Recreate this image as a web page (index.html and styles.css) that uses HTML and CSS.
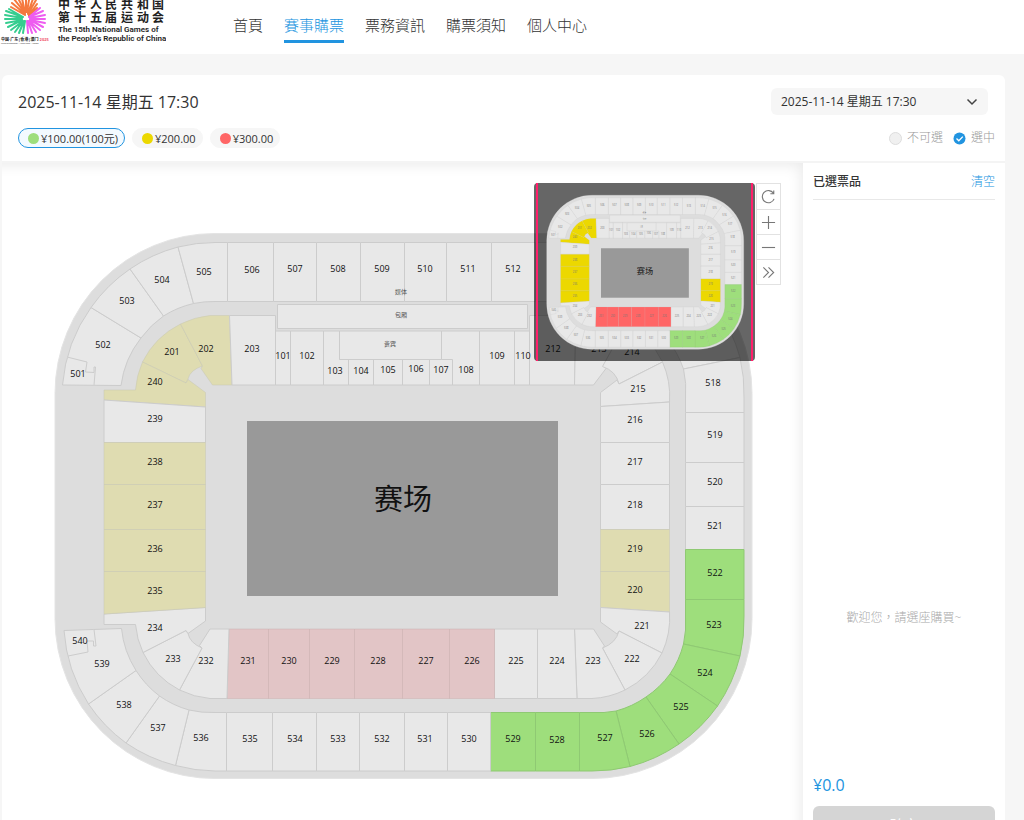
FILE: index.html
```html
<!DOCTYPE html>
<html lang="zh-Hant">
<head>
<meta charset="UTF-8">
<meta name="viewport" content="width=device-width, initial-scale=1.0">
<title>賽事購票</title>
<link rel="stylesheet" href="styles.css">
</head>

<body>
<header class="topbar">
    <a class="logo" href="#" aria-label="第十五届运动会">
        <svg width="166" height="56" viewBox="0 -10 166 56">
            <g class="petals orange">
                <path d="M25 15L11 7M25 14L12 3M25 13L14 -1M25 12L17 -4M25 12L21 -6M26 12L26 -7M27 12L30 -6M28 13L34 -4M28 14L36 0M29 15L37 4M29 16L37 8"/>
            </g>
            <g class="petals green">
                <path d="M23 17L6 11M22 18L5 15M22 19L5 19M22 20L6 23M22 20L8 27M23 21L11 30M23 21L15 32M24 21L19 33M25 21L23 33M23 17L9 9"/>
            </g>
            <g class="petals pink">
                <path d="M29 17L43 11M30 18L45 15M30 19L45 19M30 20L45 23M30 20L43 27M29 21L40 30M29 21L36 32M28 21L32 33M27 21L28 33M29 17L40 8"/>
            </g>
            <text class="logo-place" x="1" y="41">中国·广东|香港|澳门 <tspan class="logo-year">2025</tspan></text>
            <text class="logo-tiny" x="1" y="44">China Guangdong | Hong Kong | Macao</text>
            <text class="logo-cn" x="58 74 90 105 121 137 152" y="9">中华人民共和国</text>
            <text class="logo-cn" x="58 74 90 105 121 137 152" y="22">第十五届运动会</text>
            <text class="logo-en" x="58" y="32">The 15th National Games of</text>
            <text class="logo-en" x="58" y="41">the People's Republic of China</text>
        </svg>
    </a>
    <nav class="nav">
        <a href="#">首頁</a>
        <a href="#" class="active">賽事購票</a>
        <a href="#">票務資訊</a>
        <a href="#">購票須知</a>
        <a href="#">個人中心</a>
    </nav>
</header>

<main class="card">
    <section class="card-head">
        <div class="head-row">
            <h1 class="title">2025-11-14 星期五 17:30</h1>
            <div class="session">
                <select class="session-select" aria-label="場次">
                    <option>2025-11-14 星期五 17:30</option>
                </select>
                <svg class="chevron" width="12" height="8" viewBox="0 0 12 8"><path d="M1.500 1.500L6 6L10.500 1.500"/></svg>
            </div>
        </div>
        <div class="head-row">
            <div class="prices">
                <button class="price selected"><i class="dot dot-green"></i>¥100.00(100元)</button>
                <button class="price"><i class="dot dot-yellow"></i>¥200.00</button>
                <button class="price"><i class="dot dot-red"></i>¥300.00</button>
            </div>
            <div class="legend">
                <span class="legend-item"><i class="ring"></i>不可選</span>
                <span class="legend-item">
                    <svg width="13" height="13" viewBox="0 0 13 13"><circle cx="6.500" cy="6.500" r="6" fill="#2194e0"/><path d="M3.500 6.500L5.800 8.800L9.800 4.600" fill="none" stroke="#fff" stroke-width="1.300"/></svg>選中
                </span>
            </div>
        </div>
    </section>

    <div class="content">
        <section class="stage">
            <svg class="map" viewBox="2 163 801 657" preserveAspectRatio="xMinYMin meet">
                <g id="venue">
                    <rect class="ground" x="55" y="233.500" width="697" height="545" rx="160"/>

                    <!-- upper tier, clockwise from 501 -->
                    <g class="seat">
                        <path d="M62.500 385A155 155 0 0 1 91 307.500L141 338A96 96 0 0 0 121 385.500Z"/>
                        <path d="M67 357L87 362L85.500 372L94 372.500V367H95.500L94 385"/>
                        <path d="M91 307.500A155 155 0 0 1 130 269L163.500 316A96 96 0 0 0 141 338Z"/>
                        <path d="M130 269A155 155 0 0 1 178 247L193.500 303.500A96 96 0 0 0 163.500 316Z"/>
                        <path d="M178 247A155 155 0 0 1 215 242.500H227.500V301.500H215A96 96 0 0 0 193.500 303.500Z"/>
                        <path d="M227.500 242.500H273.500V301.500H227.500Z"/>
                        <path d="M273.500 242.500H316.500V301.500H273.500Z"/>
                        <path d="M316.500 242.500H360.500V301.500H316.500Z"/>
                        <path d="M360.500 242.500H404.500V301.500H360.500Z"/>
                        <path d="M404.500 242.500H446.500V301.500H404.500Z"/>
                        <path d="M446.500 242.500H491.500V301.500H446.500Z"/>
                        <path d="M491.500 242.500H535.500V301.500H491.500Z"/>
                        <path d="M535.500 242.500H581.500V301.500H535.500Z"/>
                        <path d="M581.500 242.500H592A155 155 0 0 1 629 247L613.500 303.500A96 96 0 0 0 592 301.500H581.500Z"/>
                        <path d="M629 247A155 155 0 0 1 677 269L643.500 316A96 96 0 0 0 613.500 303.500Z"/>
                        <path d="M677 269A155 155 0 0 1 716 307.500L666 338A96 96 0 0 0 643.500 316Z"/>
                        <path d="M716 307.500A155 155 0 0 1 740 357.500L683.500 369A96 96 0 0 0 666 338Z"/>
                        <path d="M740 357.500A155 155 0 0 1 744 398V412.500H685.500V398A96 96 0 0 0 683.500 369Z"/>
                        <path d="M685.500 412.500H744V462.500H685.500Z"/>
                        <path d="M685.500 462.500H744V506.500H685.500Z"/>
                        <path d="M685.500 506.500H744V549.500H685.500Z"/>
                    </g>
                    <g class="seat green">
                        <path d="M685.500 549.500H744V599.500H685.500Z"/>
                        <path d="M685.500 599.500H744V616A155 155 0 0 1 740 656L683.500 644A96 96 0 0 0 685.500 616Z"/>
                        <path d="M740 656A155 155 0 0 1 717.500 706L670 674A96 96 0 0 0 683.500 644Z"/>
                        <path d="M717.500 706A155 155 0 0 1 679 744L646 697A96 96 0 0 0 670 674Z"/>
                        <path d="M679 744A155 155 0 0 1 630 766.500L616 711A96 96 0 0 0 646 697Z"/>
                        <path d="M630 766.500A155 155 0 0 1 592 771H579.500V712.500H592A96 96 0 0 0 616 711Z"/>
                        <path d="M535.500 712.500H579.500V771H535.500Z"/>
                        <path d="M490.500 712.500H535.500V771H490.500Z"/>
                    </g>
                    <g class="seat">
                        <path d="M447.500 712.500H490.500V771H447.500Z"/>
                        <path d="M404.500 712.500H447.500V771H404.500Z"/>
                        <path d="M359.500 712.500H404.500V771H359.500Z"/>
                        <path d="M316.500 712.500H359.500V771H316.500Z"/>
                        <path d="M272.500 712.500H316.500V771H272.500Z"/>
                        <path d="M226.500 712.500H272.500V771H226.500Z"/>
                        <path d="M226.500 771H215A155 155 0 0 1 175.500 765.500L189 710A96 96 0 0 0 215 712.500H226.500Z"/>
                        <path d="M175.500 765.500A155 155 0 0 1 126 743L159.500 696A96 96 0 0 0 189 710Z"/>
                        <path d="M126 743A155 155 0 0 1 88.500 704L136 670.500A96 96 0 0 0 159.500 696Z"/>
                        <path d="M88.500 704A155 155 0 0 1 64 630.500L121.500 628.500A96 96 0 0 0 136 670.500Z"/>
                        <path d="M68 656L88 652L87 641H93.500V646H96L94 629.500"/>
                    </g>

                    <!-- boxes and tier 1 -->
                    <g class="seat">
                        <path d="M277.500 304.500H527.500V328.500H277.500Z"/>
                        <path d="M275.500 331H290.500V385H275.500Z"/>
                        <path d="M290.500 331H323.500V385H290.500Z"/>
                        <path d="M323.500 331H339.500V359.500H348.500V385H323.500Z"/>
                        <path d="M348.500 359.500H373.500V385H348.500Z"/>
                        <path d="M373.500 359.500H402.500V385H373.500Z"/>
                        <path d="M402.500 359.500H429.500V385H402.500Z"/>
                        <path d="M429.500 359.500H452.500V385H429.500Z"/>
                        <path d="M441.500 331H479.500V385H452.500V359.500H441.500Z"/>
                        <path d="M339.500 331H441.500V359.500H339.500Z"/>
                        <path d="M479.500 331H514.500V385H479.500Z"/>
                        <path d="M514.500 331H529.500V385H514.500Z"/>
                    </g>

                    <!-- lower tier, clockwise from 201 -->
                    <g class="seat yellow">
                        <path d="M142.500 362A84 84 0 0 1 180.500 324L202.500 366Q190 370 188 379L186 383Z"/>
                        <path d="M180.500 324A84 84 0 0 1 210 315.500H229.500L232 385H212.500L201 368.500L202.500 366Z"/>
                        <path d="M142.500 362L186 383L188 379.500L205.500 392.500V407L104 400V390H135.500A84 84 0 0 1 142.500 362Z"/>
                    </g>
                    <g class="seat">
                        <path d="M229.500 315.500H275.500V385H232Z"/>
                        <path d="M529.500 315.500H576L574.500 385H529.500Z"/>
                        <path d="M576 315.500H597A84 84 0 0 1 626 324L604 366L606 368.500L593.500 385H574.500Z"/>
                        <path d="M626 324A84 84 0 0 1 662.500 362L619 384Q616 371 602.500 366.500Z"/>
                        <path d="M662.500 362A84 84 0 0 1 669.500 402L600.500 406.500V392.500L617 380L619 384Z"/>
                        <path d="M600.500 406.500L669.500 402V442.500H600.500Z"/>
                        <path d="M600.500 442.500H669.500V484.500H600.500Z"/>
                        <path d="M600.500 484.500H669.500V529.500H600.500Z"/>
                    </g>
                    <g class="seat yellow">
                        <path d="M600.500 529.500H669.500V571.500H600.500Z"/>
                        <path d="M600.500 571.500H669.500V612L600.500 607.500Z"/>
                    </g>
                    <g class="seat">
                        <path d="M600.500 607.500L669.500 612A84 84 0 0 1 662 653L619 631L617 634L600.500 622Z"/>
                        <path d="M662 653A84 84 0 0 1 625 690L602.500 648Q616 643 619 631Z"/>
                        <path d="M625 690A84 84 0 0 1 592 698.500H577L574.500 629H593.500L604.500 646L602.500 648Z"/>
                        <path d="M537.500 629H574.500L577 698.500H537.500Z"/>
                        <path d="M494.500 629H537.500V698.500H494.500Z"/>
                    </g>
                    <g class="seat red">
                        <path d="M449.500 629H494.500V698.500H449.500Z"/>
                        <path d="M402.500 629H449.500V698.500H402.500Z"/>
                        <path d="M354.500 629H402.500V698.500H354.500Z"/>
                        <path d="M309.500 629H354.500V698.500H309.500Z"/>
                        <path d="M268.500 629H309.500V698.500H268.500Z"/>
                        <path d="M229 629H268.500V698.500H227Z"/>
                    </g>
                    <g class="seat">
                        <path d="M229 629H210L199.500 645.500L202 648L179.500 690A84 84 0 0 0 210 698.500H227Z"/>
                        <path d="M202 648Q190 643 188 633.500L186 630.500L143 652.500A84 84 0 0 0 179.500 690Z"/>
                        <path d="M104 614L205.500 607.500V621L188 633.500L186 630.500L143 652.500A84 84 0 0 1 135.500 624.500H104Z"/>
                        <path d="M104 400L205.500 407V442.500H104Z"/>
                    </g>
                    <g class="seat yellow">
                        <path d="M104 571.500H205.500V607.500L104 614Z"/>
                        <path d="M104 529.500H205.500V571.500H104Z"/>
                        <path d="M104 484.500H205.500V529.500H104Z"/>
                        <path d="M104 442.500H205.500V484.500H104Z"/>
                    </g>

                    <rect class="field" x="247" y="421" width="311" height="175"/>
                    <text class="field-name" x="403" y="497">赛场</text>

                    <g class="num">
                        <text x="78" y="373">501</text>
                        <text x="103" y="344">502</text>
                        <text x="127" y="300">503</text>
                        <text x="162" y="279">504</text>
                        <text x="204" y="271">505</text>
                        <text x="252" y="269">506</text>
                        <text x="295" y="268">507</text>
                        <text x="338" y="268">508</text>
                        <text x="382" y="268">509</text>
                        <text x="425" y="268">510</text>
                        <text x="468" y="268">511</text>
                        <text x="513" y="268">512</text>
                        <text x="558" y="271">513</text>
                        <text x="607" y="271">514</text>
                        <text x="649" y="280">515</text>
                        <text x="684" y="303">516</text>
                        <text x="704" y="336">517</text>
                        <text x="713" y="382">518</text>
                        <text x="715" y="434">519</text>
                        <text x="715" y="481">520</text>
                        <text x="715" y="525">521</text>
                        <text x="715" y="572">522</text>
                        <text x="714" y="624">523</text>
                        <text x="705" y="672">524</text>
                        <text x="681" y="706">525</text>
                        <text x="647" y="733">526</text>
                        <text x="605" y="737">527</text>
                        <text x="557" y="739">528</text>
                        <text x="513" y="738">529</text>
                        <text x="469" y="738">530</text>
                        <text x="425" y="738">531</text>
                        <text x="382" y="738">532</text>
                        <text x="338" y="738">533</text>
                        <text x="295" y="738">534</text>
                        <text x="250" y="738">535</text>
                        <text x="201" y="737">536</text>
                        <text x="158" y="727">537</text>
                        <text x="124" y="704">538</text>
                        <text x="102" y="663">539</text>
                        <text x="80" y="640">540</text>
                        <text x="283" y="355">101</text>
                        <text x="307" y="355">102</text>
                        <text x="335" y="370">103</text>
                        <text x="361" y="370">104</text>
                        <text x="388" y="369">105</text>
                        <text x="416" y="368">106</text>
                        <text x="441" y="369">107</text>
                        <text x="466" y="369">108</text>
                        <text x="497" y="355">109</text>
                        <text x="523" y="355">110</text>
                        <text x="172" y="351">201</text>
                        <text x="206" y="348">202</text>
                        <text x="252" y="348">203</text>
                        <text x="553" y="348">212</text>
                        <text x="599" y="348">213</text>
                        <text x="632" y="351">214</text>
                        <text x="638" y="388">215</text>
                        <text x="635" y="419">216</text>
                        <text x="635" y="461">217</text>
                        <text x="635" y="504">218</text>
                        <text x="635" y="548">219</text>
                        <text x="635" y="589">220</text>
                        <text x="642" y="625">221</text>
                        <text x="632" y="658">222</text>
                        <text x="593" y="660">223</text>
                        <text x="557" y="660">224</text>
                        <text x="516" y="660">225</text>
                        <text x="472" y="660">226</text>
                        <text x="426" y="660">227</text>
                        <text x="378" y="660">228</text>
                        <text x="332" y="660">229</text>
                        <text x="289" y="660">230</text>
                        <text x="248" y="660">231</text>
                        <text x="206" y="660">232</text>
                        <text x="173" y="658">233</text>
                        <text x="155" y="627">234</text>
                        <text x="155" y="590">235</text>
                        <text x="155" y="548">236</text>
                        <text x="155" y="504">237</text>
                        <text x="155" y="461">238</text>
                        <text x="155" y="418">239</text>
                        <text x="155" y="381">240</text>
                    </g>
                    <g class="note">
                        <text x="401" y="291">媒体</text>
                        <text x="401" y="314">包厢</text>
                        <text x="390" y="343">贵宾</text>
                    </g>
                </g>
            </svg>

            <div class="overlay">
                <div class="minimap">
                    <svg class="minimap-view" viewBox="28 190 746 630"><use href="#venue"/></svg>
                </div>
                <div class="tools">
                    <button aria-label="重置"><svg viewBox="0 0 16 16"><path d="M13.300 4.500A6.500 6.500 0 1 0 14 10.500M13.600 1.500V5H10"/></svg></button>
                    <button aria-label="放大"><svg viewBox="0 0 16 16"><path d="M1 8H15M8 1V15"/></svg></button>
                    <button aria-label="縮小"><svg viewBox="0 0 16 16"><path d="M1 8H15"/></svg></button>
                    <button aria-label="收起"><svg viewBox="0 0 16 16"><path d="M2.500 2.500L8 8L2.500 13.500M8 2.500L13.500 8L8 13.500"/></svg></button>
                </div>
            </div>
        </section>

        <aside class="cart">
            <div class="cart-head">
                <h2>已選票品</h2>
                <button class="clear">清空</button>
            </div>
            <p class="empty">歡迎您，請選座購買~</p>
            <p class="total">¥0.0</p>
            <button class="confirm" disabled>確定</button>
        </aside>
    </div>
</main>
</body>
</html>
```

FILE: styles.css
```css
* {
    box-sizing: border-box;
}
body {
    margin: 0;
    height: 100vh;
    overflow: hidden;
    background-color: #f6f6f6;
    color: #333;
    font-family: "Open Sans", "Noto Sans CJK TC", sans-serif;
    font-size: 12px;
}
button, select {
    font-family: inherit;
    color: inherit;
    border: none;
    cursor: pointer;
}
h1, h2, p {
    margin: 0;
}

/* top bar */
.topbar {
    display: flex;
    align-items: flex-end;
    height: 54px;
    background-color: #fff;
}
.logo {
    display: flex;
    padding-bottom: 8px;
}
.petals {
    fill: none;
    stroke-width: 2;
    stroke-linecap: round;
}
.orange { stroke: #f5793f; }
.green.petals { stroke: #35cd8f; }
.pink { stroke: #ee5cf0; }
.logo text {
    fill: #222;
}
.logo .logo-place {
    font-size: 4px;
    font-weight: 700;
}
.logo .logo-year {
    fill: #f0506a;
}
.logo .logo-tiny {
    font-size: 2px;
}
.logo .logo-cn {
    font-family: "Noto Sans CJK SC", sans-serif;
    font-size: 12px;
    font-weight: 700;
}
.logo .logo-en {
    font-family: Roboto, sans-serif;
    font-size: 8px;
    font-weight: 600;
}
.nav {
    display: flex;
    gap: 21px;
    padding: 0 0 11px 67px;
}
.nav a {
    padding-bottom: 3px;
    border-bottom: 3px solid transparent;
    color: #333;
    font-size: 15px;
    font-weight: 300;
    line-height: 24px;
    text-decoration: none;
}
.nav a.active {
    color: #2194e0;
    border-color: #2194e0;
}

/* card */
.card {
    margin: 21px 19px 0 2px;
    background-color: #fff;
    border-radius: 6px 6px 0 0;
}
.card-head {
    display: flex;
    flex-direction: column;
    gap: 13px;
    padding: 13px 10px 13px 16px;
    border-bottom: 2px solid #f4f4f4;
}
.head-row {
    display: flex;
    align-items: center;
    justify-content: space-between;
}
.title {
    font-size: 16px;
    font-weight: 400;
    line-height: 24px;
}
.session {
    position: relative;
    width: 217px;
    margin-right: 7px;
}
.session-select {
    display: block;
    appearance: none;
    width: 100%;
    height: 27px;
    padding: 0 10px;
    border-radius: 6px;
    background-color: #f6f6f6;
    font-size: 12px;
}
.chevron {
    position: absolute;
    right: 10px;
    top: 10px;
    fill: none;
    stroke: #444;
    stroke-width: 1.5;
    pointer-events: none;
}
.prices {
    display: flex;
    gap: 7px;
}
.price {
    display: flex;
    align-items: center;
    gap: 2px;
    height: 20px;
    padding: 0 6px 0 9px;
    border: 1px solid #f6f6f6;
    border-radius: 10px;
    background-color: #f6f6f6;
    font-size: 11px;
}
.price.selected {
    border-color: #2194e0;
    background-color: #f3faff;
}
.dot {
    width: 11px;
    height: 11px;
    border-radius: 50%;
}
.dot-green { background-color: #9ede7c; }
.dot-yellow { background-color: #ecd800; }
.dot-red { background-color: #ff6666; }
.legend {
    display: flex;
    gap: 10px;
    color: #999;
}
.legend-item {
    display: flex;
    align-items: center;
    gap: 5px;
    line-height: 16px;
    font-weight: 300;
}
.ring {
    width: 13px;
    height: 13px;
    border: 1px solid #ddd;
    border-radius: 50%;
    background-color: #f0f0f0;
}

/* seat map */
.content {
    display: flex;
    min-height: calc(100vh - 122px);
}
.stage {
    position: relative;
    flex: 1;
    box-shadow: inset -14px 14px 14px -12px #eaeaea;
}
.map {
    --yellow: #dfdcb1;
    --red: #e2c5c6;
    --label: #111;
    display: block;
    width: 100%;
}
.ground {
    fill: #ddd;
    stroke: #e4e4e4;
}
.seat {
    fill: #e8e8e8;
    stroke: #ccc;
}
.seat.green {
    fill: #9ede7c;
    stroke: #8fc973;
}
.seat.yellow {
    fill: var(--yellow);
    stroke: rgba(200, 200, 180, 0.5);
}
.seat.red {
    fill: var(--red);
    stroke: rgba(200, 170, 170, 0.4);
}
.field {
    fill: #999;
}
.num text, .note text, .field-name {
    text-anchor: middle;
    dominant-baseline: central;
    fill: #111;
}
.num text {
    font-size: 9px;
    fill: var(--label);
}
.note text {
    font-family: "Noto Sans CJK SC", sans-serif;
    font-size: 6px;
    fill: #555;
}
.field-name {
    font-family: "Noto Sans CJK SC", sans-serif;
    font-size: 29px;
}

.overlay {
    position: absolute;
    top: 20px;
    right: 22px;
    display: flex;
    align-items: flex-start;
    gap: 1px;
}
.minimap {
    width: 221px;
    height: 178px;
    padding: 0 2px;
    border-radius: 4px;
    background-color: rgba(0, 0, 0, 0.6);
}
.minimap-view {
    --yellow: #ecd800;
    --red: #ff6666;
    --label: #777;
    display: block;
    width: 100%;
    height: 100%;
    border: solid #ff1f6b;
    border-width: 0 2px;
}
.tools {
    display: flex;
    flex-direction: column;
    border: 1px solid #e2e2e2;
    background-color: #fff;
}
.tools button {
    display: flex;
    align-items: center;
    justify-content: center;
    width: 23px;
    height: 25px;
    padding: 0;
    background: none;
}
.tools button + button {
    border-top: 1px solid #e2e2e2;
}
.tools svg {
    width: 15px;
    height: 15px;
    fill: none;
    stroke: #777;
    stroke-width: 1.2;
}

/* cart */
.cart {
    display: flex;
    flex-direction: column;
    width: 202px;
    padding: 0 10px 20px;
}
.cart-head {
    display: flex;
    align-items: center;
    justify-content: space-between;
    height: 37px;
    border-bottom: 1px solid #e8e8e8;
}
.cart-head h2 {
    font-size: 12px;
    font-weight: 500;
}
.clear {
    padding: 0;
    background: none;
    color: #2194e0;
    font-size: 12px;
    font-weight: 300;
}
.empty {
    display: flex;
    flex: 1;
    align-items: flex-end;
    justify-content: center;
    padding-bottom: 148px;
    color: #aaa;
    font-weight: 300;
}
.total {
    padding-bottom: 10px;
    color: #2194e0;
    font-size: 16px;
    font-weight: 500;
}
.confirm {
    height: 35px;
    border-radius: 6px;
    background-color: #d5d5d5;
    color: #fff;
    font-size: 14px;
}
```
